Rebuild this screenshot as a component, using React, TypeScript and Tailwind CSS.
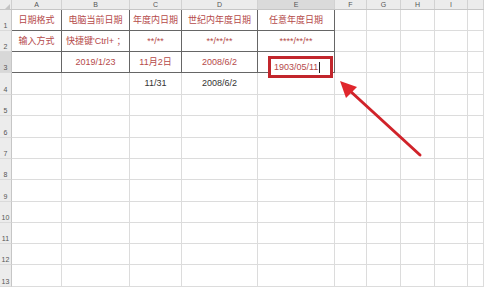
import React from "react";

const colWidths = [
  "w-[50px]",
  "w-[68px]",
  "w-[52px]",
  "w-[76px]",
  "w-[77px]",
  "w-[32px]",
  "w-[34px]",
  "w-[34px]",
  "w-[33px]",
  "w-[16px]",
];
const letters = ["A", "B", "C", "D", "E", "F", "G", "H", "I", ""];
const rowHeights = [
  "h-[21px]",
  "h-[21px]",
  "h-[21px]",
  "h-[22px]",
  "h-[21px]",
  "h-[22px]",
  "h-[21px]",
  "h-[21px]",
  "h-[22px]",
  "h-[21px]",
  "h-[21px]",
  "h-[21px]",
  "h-[22px]",
];

type Cell = { text: string; red?: boolean; left?: boolean };

const data: (Cell | null)[][] = [
  [
    { text: "日期格式", red: true },
    { text: "电脑当前日期", red: true },
    { text: "年度内日期", red: true },
    { text: "世纪内年度日期", red: true },
    { text: "任意年度日期", red: true },
  ],
  [
    { text: "输入方式", red: true },
    { text: "快捷键'Ctrl+ ；", red: true, left: true },
    { text: "**/**", red: true },
    { text: "**/**/**", red: true },
    { text: "****/**/**", red: true },
  ],
  [
    null,
    { text: "2019/1/23", red: true },
    { text: "11月2日", red: true },
    { text: "2008/6/2", red: true },
    null,
  ],
  [null, null, { text: "11/31" }, { text: "2008/6/2" }, null],
];

const font = "font-['Liberation_Sans','Noto_Sans_CJK_SC',sans-serif]";

export default function App() {
  return (
    <div className={`relative w-[484px] h-[287px] overflow-hidden bg-white ${font}`}>
      {/* column header */}
      <div className="flex h-[10px] bg-[#ececec] border-b border-[#c6c6c6]">
        <div className="w-[12px] shrink-0 border-r border-[#cfcfcf] flex items-end justify-end pr-[1px]">
          <div className="w-0 h-0 border-l-[5px] border-l-transparent border-b-[5px] border-b-[#c4c4c4]" />
        </div>
        {letters.map((l, i) => (
          <div
            key={i}
            className={`${colWidths[i]} shrink-0 border-r border-[#d2d2d2] flex items-center justify-center text-[7px] leading-none text-[#555] ${
              i === 4 ? "bg-[#dadada]" : ""
            }`}
          >
            {l}
          </div>
        ))}
      </div>

      {rowHeights.map((h, r) => (
        <div key={r} className={`flex ${h}`}>
          <div
            className={`w-[12px] shrink-0 border-r border-[#c6c6c6] border-b border-b-[#dadada] flex items-end justify-center pb-[1px] text-[7px] leading-none text-[#555] ${
              r === 2 ? "bg-[#d8d8d8]" : "bg-[#ececec]"
            }`}
          >
            {r + 1}
          </div>
          {colWidths.map((w, c) => {
            const cell = data[r]?.[c] ?? null;
            const inTable = r < 3 && c < 5;
            return (
              <div
                key={c}
                className={`${w} shrink-0 border-r border-b overflow-hidden whitespace-nowrap flex items-center text-[9px] leading-none ${
                  inTable ? "border-[#666]" : "border-[#dcdcdc]"
                } ${cell?.left ? "justify-start pl-[4px]" : "justify-center"} ${
                  cell?.red ? "text-[#b54a4a]" : "text-[#333]"
                }`}
              >
                {cell?.text}
              </div>
            );
          })}
        </div>
      ))}

      {/* E3 being edited, red annotation box */}
      <div className="absolute left-[268px] top-[56px] w-[65px] h-[22px] border-[3px] border-[#c2262c] bg-white flex items-center pl-[3px] text-[9px] leading-none text-[#b54a4a]">
        1903/05/11
        <span className="ml-[1px] w-px h-[11px] bg-[#222]" />
      </div>

      {/* arrow */}
      <svg className="absolute left-0 top-0" width="484" height="287" viewBox="0 0 484 287">
        <line x1="420" y1="155" x2="349" y2="90" stroke="#d0232a" strokeWidth="3" strokeLinecap="round" />
        <polygon points="340,81 357,87 346,98" fill="#e0262c" />
      </svg>
    </div>
  );
}
